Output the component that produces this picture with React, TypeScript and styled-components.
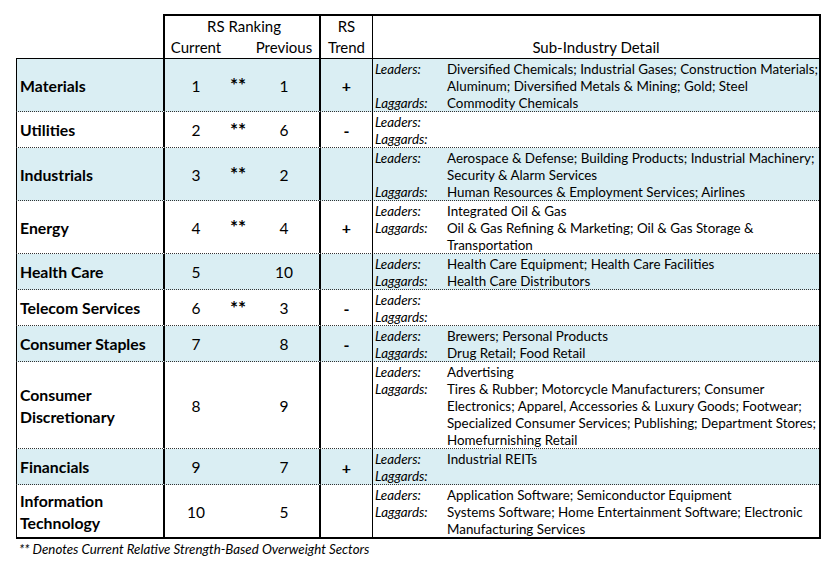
import React from "react";
import styled, { createGlobalStyle } from "styled-components";

const GlobalStyle = createGlobalStyle`
  html, body { margin: 0; padding: 0; background: #ffffff; }
  body { font-family: Lato, "Open Sans", sans-serif; color: #000; }
`;

const COLS = "147px 156px 53px 449px";
const SHADE = "#daeef3";

const Page = styled.div`
  padding: 14px 0 0 16px;
  width: 805px;
`;

const HeaderRow = styled.div`
  display: grid;
  grid-template-columns: ${COLS};
  height: 44px;
`;

const HeaderBlank = styled.div``;

const HeaderCell = styled.div<{ $thick?: boolean; $last?: boolean }>`
  box-sizing: border-box;
  border-top: 2px solid #000;
  border-left: ${(p) => (p.$thick ? 2 : 1)}px solid #000;
  border-right: ${(p) => (p.$last ? "2px solid #000" : "none")};
  display: flex;
  flex-direction: column;
  justify-content: flex-end;
  align-items: center;
  font-size: 15px;
  line-height: 21px;
`;

const RankSub = styled.div`
  display: grid;
  grid-template-columns: 62px 22px 70px;
  width: 100%;
  text-align: center;
`;

const RankTitle = styled.div`
  width: 100%;
  text-align: center;
  padding-left: 4px;
  box-sizing: border-box;
`;

const Body = styled.div`
  border-top: 1px solid #000;
`;

const Row = styled.div<{ $shaded: boolean; $last: boolean }>`
  display: grid;
  grid-template-columns: ${COLS};
  background: ${(p) => (p.$shaded ? SHADE : "#fff")};
  border-bottom: ${(p) => (p.$last ? "2px solid #000" : "1px dotted #333")};
`;

const SectorCell = styled.div`
  box-sizing: border-box;
  border-left: 1px solid #000;
  display: flex;
  align-items: center;
  padding: 1px 0 0 3px;
  font-weight: 700;
  font-size: 15.8px;
  line-height: 22px;
`;

const RankCell = styled.div`
  box-sizing: border-box;
  border-left: 2px solid #000;
  display: grid;
  grid-template-columns: 62px 22px 70px;
  align-items: center;
  text-align: center;
  font-size: 15.5px;
  padding-top: 1px;
`;

const Stars = styled.span`
  font-weight: 700;
  font-size: 19px;
  line-height: 19px;
  margin-top: -2px;
`;

const TrendCell = styled.div`
  box-sizing: border-box;
  border-left: 2px solid #000;
  display: flex;
  align-items: center;
  justify-content: center;
  font-size: 16px;
  font-weight: 700;
  padding-top: 1px;
`;

const DetailCell = styled.div`
  box-sizing: border-box;
  border-left: 1px solid #000;
  border-right: 2px solid #000;
  padding: 1.5px 0 0 2px;
  display: grid;
  grid-template-columns: 72px 1fr;
  font-size: 13.4px;
  line-height: 17px;
  margin-bottom: -0.5px;
`;

const Label = styled.div`
  font-style: italic;
`;

const Lines = styled.div`
  white-space: nowrap;
`;

const Line = styled.div`
  min-height: 17px;
`;

const Footnote = styled.div`
  padding: 2px 0 0 3px;
  font-style: italic;
  font-size: 13.3px;
  line-height: 17px;
`;

type Sector = {
  name: React.ReactNode;
  cur: string;
  star: boolean;
  prev: string;
  trend: string;
  leaders: string[];
  laggards: string[];
};

const rows: Sector[] = [
  {
    name: "Materials", cur: "1", star: true, prev: "1", trend: "+",
    leaders: ["Diversified Chemicals; Industrial Gases; Construction Materials;", "Aluminum; Diversified Metals & Mining; Gold; Steel"],
    laggards: ["Commodity Chemicals"],
  },
  { name: "Utilities", cur: "2", star: true, prev: "6", trend: "-", leaders: [], laggards: [] },
  {
    name: "Industrials", cur: "3", star: true, prev: "2", trend: "",
    leaders: ["Aerospace & Defense; Building Products; Industrial Machinery;", "Security & Alarm Services"],
    laggards: ["Human Resources & Employment Services; Airlines"],
  },
  {
    name: "Energy", cur: "4", star: true, prev: "4", trend: "+",
    leaders: ["Integrated Oil & Gas"],
    laggards: ["Oil & Gas Refining & Marketing; Oil & Gas Storage &", "Transportation"],
  },
  {
    name: "Health Care", cur: "5", star: false, prev: "10", trend: "",
    leaders: ["Health Care Equipment; Health Care Facilities"],
    laggards: ["Health Care Distributors"],
  },
  { name: "Telecom Services", cur: "6", star: true, prev: "3", trend: "-", leaders: [], laggards: [] },
  {
    name: "Consumer Staples", cur: "7", star: false, prev: "8", trend: "-",
    leaders: ["Brewers; Personal Products"],
    laggards: ["Drug Retail; Food Retail"],
  },
  {
    name: (<>Consumer<br />Discretionary</>), cur: "8", star: false, prev: "9", trend: "",
    leaders: ["Advertising"],
    laggards: [
      "Tires & Rubber; Motorcycle Manufacturers; Consumer",
      "Electronics; Apparel, Accessories & Luxury Goods; Footwear;",
      "Specialized Consumer Services; Publishing; Department Stores;",
      "Homefurnishing Retail",
    ],
  },
  { name: "Financials", cur: "9", star: false, prev: "7", trend: "+", leaders: ["Industrial REITs"], laggards: [] },
  {
    name: (<>Information<br />Technology</>), cur: "10", star: false, prev: "5", trend: "",
    leaders: ["Application Software; Semiconductor Equipment"],
    laggards: ["Systems Software; Home Entertainment Software; Electronic", "Manufacturing Services"],
  },
];

const LineList = ({ items }: { items: string[] }) => (
  <Lines>
    {items.length === 0 ? <Line /> : items.map((t, i) => <Line key={i}>{t}</Line>)}
  </Lines>
);

export default function App() {
  return (
    <>
      <GlobalStyle />
      <Page>
        <HeaderRow>
          <HeaderBlank />
          <HeaderCell $thick>
            <RankTitle>RS Ranking</RankTitle>
            <RankSub>
              <span>Current</span>
              <span />
              <span>Previous</span>
            </RankSub>
          </HeaderCell>
          <HeaderCell $thick>
            <span>RS</span>
            <span>Trend</span>
          </HeaderCell>
          <HeaderCell $last>
            <span>Sub-Industry Detail</span>
          </HeaderCell>
        </HeaderRow>
        <Body>
          {rows.map((r, i) => (
            <Row key={i} $shaded={i % 2 === 0} $last={i === rows.length - 1}>
              <SectorCell>{r.name}</SectorCell>
              <RankCell>
                <span>{r.cur}</span>
                <Stars>{r.star ? "**" : ""}</Stars>
                <span>{r.prev}</span>
              </RankCell>
              <TrendCell>{r.trend}</TrendCell>
              <DetailCell>
                <Label>Leaders:</Label>
                <LineList items={r.leaders} />
                <Label>Laggards:</Label>
                <LineList items={r.laggards} />
              </DetailCell>
            </Row>
          ))}
        </Body>
        <Footnote>** Denotes Current Relative Strength-Based Overweight Sectors</Footnote>
      </Page>
    </>
  );
}
